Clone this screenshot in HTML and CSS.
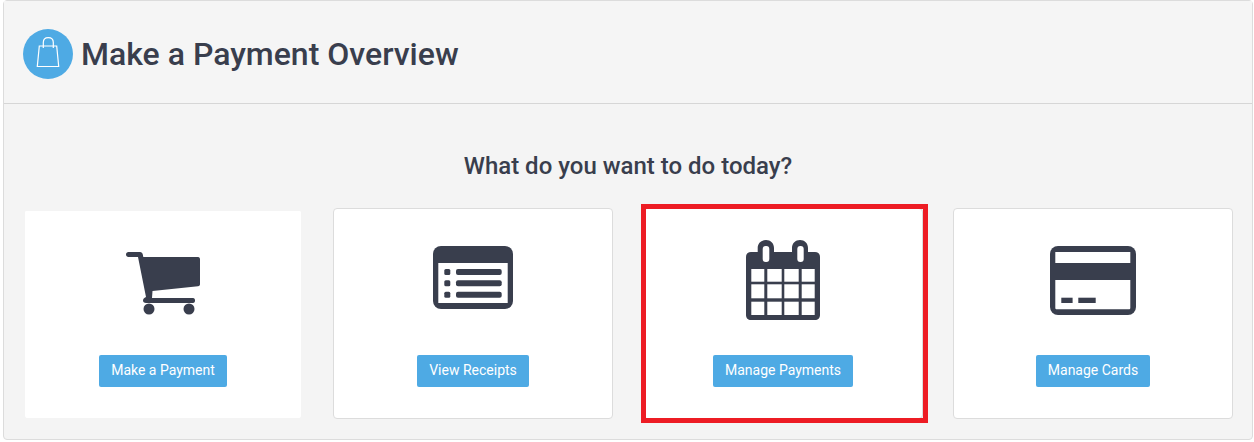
FILE: index.html
```html
<!DOCTYPE html>
<html lang="en">
<head>
    <meta charset="UTF-8">
    <meta name="viewport" content="width=device-width, initial-scale=1.0">
    <title>Make a Payment Overview</title>
    <link rel="stylesheet" href="styles.css">
</head>
<body>
    <div class="panel">
        <div class="panel-header">
            <span class="header-icon">
                <svg width="24" height="34" viewBox="0 0 24 34" fill="none" stroke="#fff" stroke-width="1.200">
                    <path d="M3.300 9H20.700L22.700 29.500H1.300Z"/>
                    <path d="M7.300 11V5.500C7.300 2.500 9.300 0.600 12.300 0.600C15.300 0.600 17.300 2.500 17.300 5.500V11"/>
                </svg>
            </span>
            <h1 class="panel-title">Make a Payment Overview</h1>
        </div>
        <div class="panel-body">
            <h2 class="question">What do you want to do today?</h2>
            <div class="cards">
                <div class="card card-plain">
                    <div class="icon-box">
                        <svg class="icon-cart" width="74" height="63" viewBox="0 0 74 63" fill="#393e4d">
                            <path d="M2.500 0H14C15.500 0 16.500 1 16.800 2.500L17.300 5H72C73.500 5 74 6 74 7.500V32C74 33.500 73.500 34 72 34.200L26.500 39L26 46H67C68.500 46 69 47 69 48.500C69 50 68.500 51 67 51H20C18 51 17 50 17 48.500C17 47 18 46 20 45L12 5H2.500C1 5 0 4 0 2.500C0 1 1 0 2.500 0Z"/>
                            <circle cx="23" cy="57" r="5.500"/>
                            <circle cx="63" cy="57" r="5.500"/>
                        </svg>
                    </div>
                    <a class="btn" href="#">Make a Payment</a>
                </div>
                <div class="card">
                    <div class="icon-box">
                        <svg class="icon-list" width="80" height="63" viewBox="0 0 80 63">
                            <rect width="80" height="63" rx="8" fill="#393e4d"/>
                            <rect x="5.300" y="17" width="69.400" height="40" fill="#fff"/>
                            <g fill="#393e4d">
                                <rect x="11.300" y="23" width="6" height="6" rx="1.500"/>
                                <rect x="11.300" y="34.300" width="6" height="6" rx="1.500"/>
                                <rect x="11.300" y="45.700" width="6" height="6" rx="1.500"/>
                                <rect x="23" y="23" width="45.700" height="6" rx="2"/>
                                <rect x="23" y="34.300" width="45.700" height="6" rx="2"/>
                                <rect x="23" y="45.700" width="45.700" height="6" rx="2"/>
                            </g>
                        </svg>
                    </div>
                    <a class="btn" href="#">View Receipts</a>
                </div>
                <div class="card">
                    <div class="icon-box">
                        <svg class="icon-calendar" width="74" height="80" viewBox="0 0 74 80">
                            <path d="M5 12H11.700V8C11.700 3 15.500 0 20 0C24.500 0 28 3 28 8V12H46V8C46 3 49.500 0 54 0C58.500 0 62 3 62 8V12H69C72 12 74 14 74 17V75C74 78 72 80 69 80H5C2 80 0 78 0 75V17C0 14 2 12 5 12Z" fill="#393e4d"/>
                            <g fill="#fff">
                                <rect x="16.700" y="6" width="6.600" height="16" rx="3"/>
                                <rect x="51.300" y="6" width="6.400" height="16" rx="3"/>
                                <rect x="5.300" y="29" width="13" height="12.700"/>
                                <rect x="21.300" y="29" width="14.400" height="12.700"/>
                                <rect x="38.300" y="29" width="14.400" height="12.700"/>
                                <rect x="55.700" y="29" width="13" height="12.700"/>
                                <rect x="5.300" y="44.300" width="13" height="14"/>
                                <rect x="21.300" y="44.300" width="14.400" height="14"/>
                                <rect x="38.300" y="44.300" width="14.400" height="14"/>
                                <rect x="55.700" y="44.300" width="13" height="14"/>
                                <rect x="5.300" y="61.700" width="13" height="13.300"/>
                                <rect x="21.300" y="61.700" width="14.400" height="13.300"/>
                                <rect x="38.300" y="61.700" width="14.400" height="13.300"/>
                                <rect x="55.700" y="61.700" width="13" height="13.300"/>
                            </g>
                        </svg>
                    </div>
                    <a class="btn" href="#">Manage Payments</a>
                    <div class="mark"></div>
                </div>
                <div class="card">
                    <div class="icon-box">
                        <svg class="icon-list" width="86" height="69" viewBox="0 0 86 69">
                            <rect width="86" height="69" rx="8" fill="#393e4d"/>
                            <rect x="5.300" y="6" width="75" height="11" fill="#fff"/>
                            <path d="M5.300 34H80.300V62C80.300 63 79.800 63.300 79 63.300H6.800C5.800 63.300 5.300 63 5.300 62Z" fill="#fff"/>
                            <rect x="11.300" y="51.700" width="11.300" height="5.300" fill="#393e4d"/>
                            <rect x="28.300" y="51.700" width="17.400" height="5.300" fill="#393e4d"/>
                        </svg>
                    </div>
                    <a class="btn" href="#">Manage Cards</a>
                </div>
            </div>
        </div>
    </div>
</body>
</html>
```

FILE: styles.css
```css
body {
    margin: 0;
    font-family: Roboto, Arial, sans-serif;
    color: #393e4d;
}
.panel {
    width: 1250px;
    height: 440px;
    margin-left: 3px;
    box-sizing: border-box;
    background-color: #f4f4f4;
    border: 1px solid #dcdcdc;
    border-radius: 4px;
}
.panel-header {
    display: flex;
    align-items: center;
    gap: 8px;
    height: 103px;
    padding: 3px 19px 0;
    box-sizing: border-box;
    background-color: #f5f5f5;
    border-bottom: 1px solid #d6d6d6;
}
.header-icon {
    display: flex;
    align-items: center;
    justify-content: center;
    width: 50px;
    height: 50px;
    border-radius: 50%;
    background-color: #4eaae4;
}
.panel-title {
    margin: 0;
    font-size: 32px;
    font-weight: 500;
    line-height: 36px;
}
.panel-body {
    padding: 0 19px;
}
.question {
    margin: 0;
    padding-top: 47px;
    font-size: 24px;
    font-weight: 500;
    line-height: 30px;
    text-align: center;
}
.cards {
    display: grid;
    grid-template-columns: repeat(4, 280px);
    gap: 30px;
    margin-top: 27px;
}
.card {
    position: relative;
    display: flex;
    flex-direction: column;
    align-items: center;
    height: 211px;
    box-sizing: border-box;
    background-color: #fff;
    border: 1px solid #dcdcdc;
    border-radius: 4px;
}
.card-plain {
    border: 2px solid #f4f4f4;
    border-top-width: 3px;
    border-bottom-width: 1px;
}
.icon-box {
    height: 146px;
}
.card-plain .icon-box {
    height: 144px;
}
.icon-box svg {
    display: block;
}
.icon-cart {
    margin-top: 41px;
}
.icon-list {
    margin-top: 37px;
}
.icon-calendar {
    margin-top: 31px;
}
.btn {
    padding: 0 12.200px;
    height: 32px;
    line-height: 31px;
    font-size: 14px;
    color: #fff;
    text-decoration: none;
    background-color: #4eaae4;
    border-radius: 2px;
}
.mark {
    position: absolute;
    left: -3px;
    top: -5px;
    width: 287px;
    height: 219px;
    box-sizing: border-box;
    border: 5px solid #ed1c24;
}
```
